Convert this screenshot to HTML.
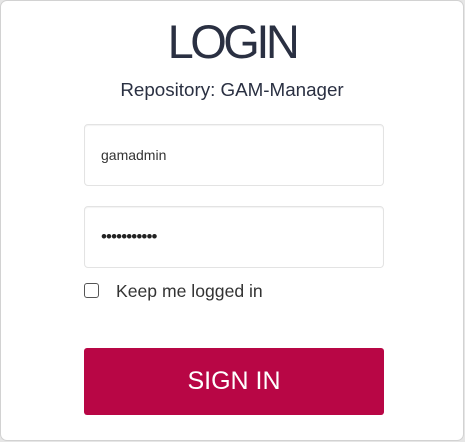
<!DOCTYPE html>
<html><head><meta charset="utf-8"><style>
*{margin:0;padding:0;box-sizing:border-box}
html,body{width:465px;height:442px;background:#e6e6e6;overflow:hidden;font-family:"Liberation Sans",Arial,sans-serif}
.card{position:absolute;left:0;top:0;width:464px;height:441px;background:#fff;border:1px solid #d2d2d2;border-radius:7px}
.t{position:absolute;left:-1px;width:464px;text-align:center;color:#2a3042}
.repo{top:78px;font-size:18.8px;line-height:22px}
.in{position:absolute;left:83px;width:300px;height:62px;border:1px solid #e3e3e3;border-radius:4px;box-shadow:inset 0 1px 1px rgba(0,0,0,.05);padding-left:16px;font-size:14px;color:#333;line-height:60px}
.cb{position:absolute;left:83px;top:282px;width:15px;height:15px;border:1.5px solid #555;border-radius:3px}
.lbl{position:absolute;left:115px;top:279px;font-size:17.6px;color:#333;line-height:22px}
.btn{position:absolute;left:83px;top:347px;width:300px;height:67px;background:#b80645;border-radius:3px;color:#fff;font-size:25px;text-align:center;line-height:67px}
</style></head><body>
<div class="card">
<div class="t" style="top:15px;font-size:47px;letter-spacing:-3.5px;line-height:52px">LOGIN</div>
<div class="t repo">Repository: GAM-Manager</div>
<div class="in" style="top:123px">gamadmin</div>
<div class="in" style="top:205px;font-size:17px;letter-spacing:-0.9px;color:#222">•••••••••••</div>
<div class="cb"></div>
<div class="lbl">Keep me logged in</div>
<div class="btn">SIGN IN</div>
</div>
</body></html>
